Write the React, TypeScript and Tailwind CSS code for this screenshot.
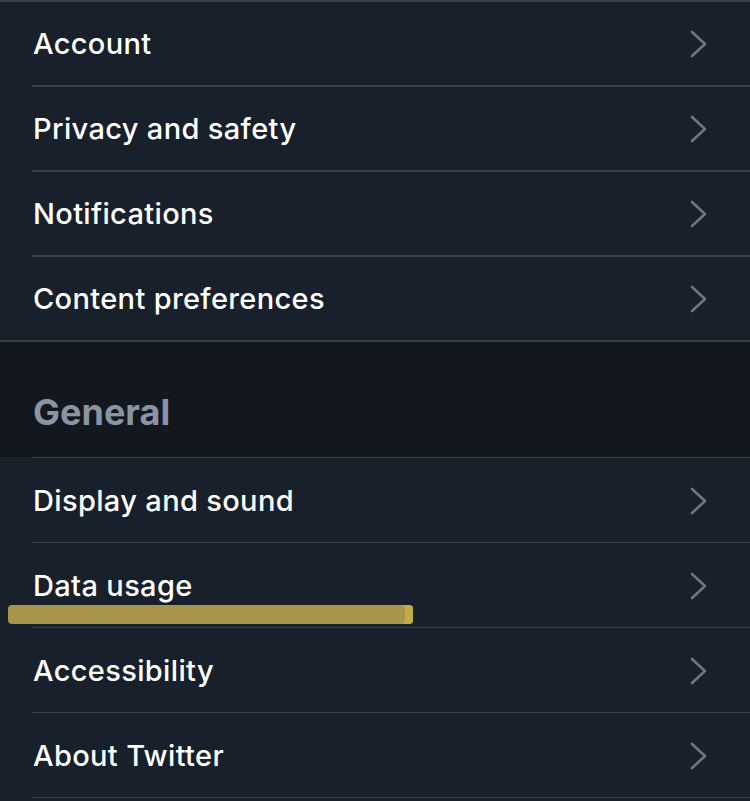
const accountItems = ['Account', 'Privacy and safety', 'Notifications', 'Content preferences'];
const generalItems = ['Display and sound', 'Data usage', 'Accessibility', 'About Twitter'];

function Chevron() {
    return (
        <svg width="20" height="28" viewBox="0 0 20 28" fill="none" className="shrink-0">
            <path d="M3 2 L16 14 L3 26" stroke="#6e7681" strokeWidth="2.6" strokeLinecap="round" strokeLinejoin="round" />
        </svg>
    );
}

function Row({ label, highlight }: { label: string; highlight?: boolean }) {
    return (
        <div className="relative flex h-[85px] items-center justify-between pl-[33px] pr-[41px]">
            <span className="text-[29px] font-medium tracking-[0.35px] text-white">{label}</span>
            <Chevron />
            {highlight && (
                <div className="absolute left-[8px] top-[62px] h-[19px] w-[405px] rounded-[4px] bg-[#a8954a] shadow-[inset_-8px_0_0_#c4ab4a]" />
            )}
            <div className="absolute bottom-0 left-[32px] right-0 h-[1.5px] bg-[#38404b]" />
        </div>
    );
}

export default function App() {
    return (
        <div
            className="h-[801px] w-[750px] overflow-hidden bg-[#18202b]"
            style={{ fontFamily: 'Inter, "Noto Sans", sans-serif' }}
        >
            <div className="h-[1.5px] bg-[#38404b]" />
            {accountItems.map((item) => (
                <Row key={item} label={item} />
            ))}
            <div className="-mt-[1.5px] h-[1.5px] bg-[#38404b]" />
            <div className="flex h-[115px] items-center bg-[#13181f] pl-[33px] pt-[25px]">
                <h2 className="text-[36px] font-bold text-[#8a95a3]">General</h2>
            </div>
            <div className="ml-[32px] h-[1.5px] bg-[#38404b]" />
            {generalItems.map((item) => (
                <Row key={item} label={item} highlight={item === 'Data usage'} />
            ))}
        </div>
    );
}
